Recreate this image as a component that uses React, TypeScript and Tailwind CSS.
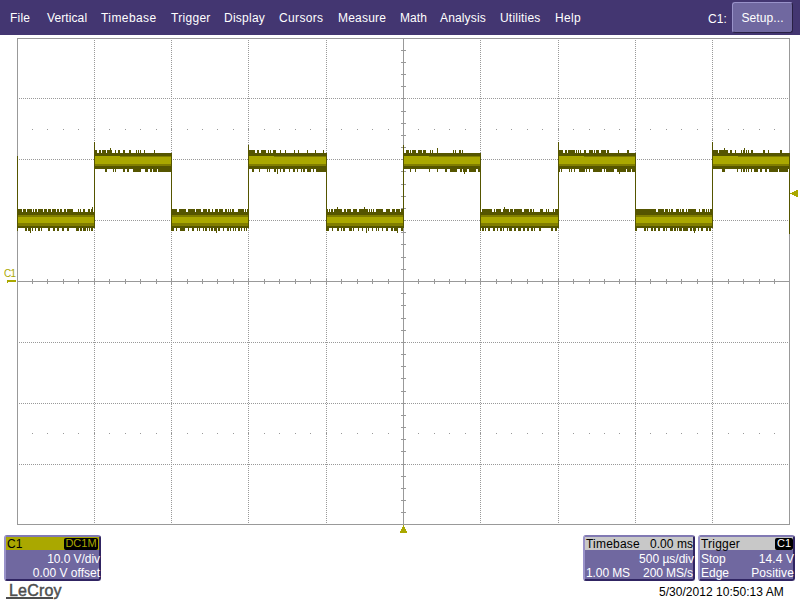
import React from "react";

type Seg = [number, number];

interface Level {
  high: boolean;
  x: number;
  end: number;
  top: Seg[];
  bottom: Seg[];
  peaks: number[];
  dips: number[];
}

const menu = [
  { label: "File", cls: "w-[37px] tracking-[0.2px]" },
  { label: "Vertical", cls: "w-[54px] tracking-[0.1px]" },
  { label: "Timebase", cls: "w-[70px] tracking-[0.42px]" },
  { label: "Trigger", cls: "w-[53px] tracking-[0.3px]" },
  { label: "Display", cls: "w-[55px] tracking-[0.25px]" },
  { label: "Cursors", cls: "w-[59px] tracking-[0.35px]" },
  { label: "Measure", cls: "w-[62px] tracking-[0.2px]" },
  { label: "Math", cls: "w-[40px] tracking-[0.1px]" },
  { label: "Analysis", cls: "w-[60px] tracking-[0.15px]" },
  { label: "Utilities", cls: "w-[55px] tracking-[0.2px]" },
  { label: "Help", cls: "w-[40px] tracking-[0.3px]" },
];

const levels: Level[] = [
  {
    high: false, x: 17, end: 95,
    top: [[17,5],[23,3],[27,5],[33,1],[35,2],[38,5],[44,3],[48,3],[52,4],[57,2],[60,2],[64,2],[67,6],[78,1],[80,1],[83,2],[88,2],[91,2]],
    bottom: [[17,1],[25,2],[28,3],[32,1],[35,1],[38,2],[41,1],[48,2],[53,2],[57,2],[62,2],[67,2],[76,3],[80,2],[83,3],[87,1],[89,1],[91,2]],
    peaks: [92], dips: [30],
  },
  {
    high: true, x: 94, end: 172,
    top: [[95,2],[99,2],[102,4],[107,5],[115,1],[118,2],[123,2],[129,2],[136,1],[138,1],[140,1],[144,1],[154,1]],
    bottom: [[105,2],[113,1],[115,1],[123,2],[127,2],[133,8],[145,3],[150,2],[153,4],[158,13]],
    peaks: [110], dips: [],
  },
  {
    high: false, x: 171, end: 249,
    top: [[172,5],[179,7],[188,7],[196,5],[203,4],[208,2],[212,1],[215,3],[219,4],[225,2],[228,1],[230,1],[232,2],[238,6],[245,1],[247,1]],
    bottom: [[172,2],[176,1],[180,5],[188,1],[192,2],[197,1],[199,1],[203,1],[205,2],[209,1],[211,2],[214,3],[218,2],[223,1],[227,2],[230,1],[233,1],[235,1],[238,2],[241,1],[244,1],[246,1]],
    peaks: [], dips: [216],
  },
  {
    high: true, x: 248, end: 327,
    top: [[249,6],[257,2],[261,5],[268,1],[270,1],[273,3],[280,1],[285,1],[294,1],[298,1],[307,1],[315,1],[323,1]],
    bottom: [[252,2],[259,1],[267,1],[269,1],[274,2],[277,1],[280,1],[283,2],[289,1],[293,2],[297,1],[301,1],[303,2],[307,4],[313,1],[316,10]],
    peaks: [], dips: [277],
  },
  {
    high: false, x: 326, end: 404,
    top: [[327,1],[329,1],[331,2],[334,8],[344,2],[347,4],[353,4],[359,9],[369,1],[371,1],[373,1],[376,7],[386,4],[392,3],[396,4],[401,2]],
    bottom: [[327,2],[332,1],[337,2],[341,1],[343,2],[349,3],[353,1],[358,1],[362,1],[366,1],[368,1],[372,1],[376,1],[378,1],[382,1],[386,2],[391,2],[394,4],[401,2]],
    peaks: [337,364], dips: [366,397],
  },
  {
    high: true, x: 403, end: 481,
    top: [[406,3],[410,1],[412,4],[418,4],[423,3],[430,1],[432,1],[437,1],[453,1],[455,1],[459,2],[462,1]],
    bottom: [[410,1],[415,1],[429,1],[437,1],[445,2],[450,7],[460,2],[463,4],[469,7],[478,2]],
    peaks: [437], dips: [464],
  },
  {
    high: false, x: 480, end: 559,
    top: [[482,10],[494,1],[496,5],[503,6],[510,3],[514,8],[524,5],[530,2],[533,1],[540,3],[546,1],[548,1],[553,1],[555,3]],
    bottom: [[482,2],[485,1],[488,2],[493,2],[497,1],[500,2],[503,1],[507,1],[509,3],[514,2],[518,3],[523,2],[527,2],[531,2],[534,1],[539,2],[551,2],[555,2]],
    peaks: [504], dips: [],
  },
  {
    high: true, x: 558, end: 636,
    top: [[559,4],[565,2],[568,7],[576,1],[578,1],[580,1],[584,2],[589,4],[594,1],[596,3],[601,5],[607,2],[618,1],[627,2]],
    bottom: [[559,1],[561,1],[569,1],[571,1],[574,1],[579,6],[586,1],[589,1],[593,9],[604,1],[606,8],[617,9],[627,4],[632,3]],
    peaks: [], dips: [619],
  },
  {
    high: false, x: 635, end: 713,
    top: [[636,20],[658,6],[665,3],[669,1],[671,2],[676,3],[680,1],[682,2],[686,1],[688,8],[699,1],[702,3],[706,1],[708,1],[710,2]],
    bottom: [[636,1],[644,2],[647,1],[651,2],[654,2],[658,2],[663,2],[666,1],[670,3],[674,2],[677,1],[679,3],[683,5],[690,2],[693,3],[698,1],[701,2],[706,2],[709,2]],
    peaks: [], dips: [694],
  },
  {
    high: true, x: 712, end: 790,
    top: [[713,5],[719,4],[723,5],[730,2],[735,1],[741,1],[743,2],[746,1],[748,1],[751,2],[763,2],[768,1],[780,2]],
    bottom: [[722,3],[737,1],[741,1],[743,2],[746,1],[748,1],[751,1],[754,4],[760,2],[765,2],[769,9],[779,9]],
    peaks: [724,744], dips: [],
  },
];

// Vertical strokes at each transition: x, top, bottom
const edges: [number, number, number][] = [
  [17,156,230],[94,142,228],[171,153,231],[248,145,228],[326,153,231],
  [403,145,228],[480,153,231],[558,142,228],[635,153,231],[712,142,228],[789,153,234],
];

const tickX = (i: number) => Math.min(789, Math.floor(17 + i * 15.46));
const tickY = (i: number) => Math.floor(38.1 + i * 12.17);
const range = (n: number) => Array.from({ length: n }, (_, i) => i);

function Plateau({ level }: { level: Level }) {
  const { high, x, end, top, bottom, peaks, dips } = level;
  const t = high ? 153 : 212;
  const b = high ? 169 : 228;
  const w = end - x;
  return (
    <g>
      <g fill="#555500">
        <rect x={x} y={t} width={w} height={16} />
        {top.map(([s, n]) => <rect key={s} x={s} y={t - 3} width={n} height={3} />)}
        {bottom.map(([s, n]) => <rect key={s} x={s} y={b} width={n} height={3} />)}
        {peaks.map((p) => <rect key={p} x={p} y={t - 5} width={1} height={5} />)}
        {dips.map((p) => <rect key={p} x={p} y={b} width={1} height={5} />)}
      </g>
      <rect x={x} y={t + 3} width={w} height={high ? 10 : 11} fill="#807d00" />
      <rect x={x} y={high ? 157 : 217} width={w} height={high ? 7 : 6} fill="#aaa800" />
      {high && <rect x={x} y={156} width={26} height={1} fill="#aaa800" />}
    </g>
  );
}

function Graticule() {
  return (
    <svg width="800" height="500" viewBox="0 35 800 500" shapeRendering="crispEdges" className="block">
      <g stroke="#999999" strokeDasharray="1 1">
        {range(9).map((i) => {
          const x = tickX((i + 1) * 5) + 0.5;
          return <line key={i} x1={x} x2={x} y1={40} y2={524} />;
        })}
        {range(7).map((i) => {
          const y = tickY((i + 1) * 5) + 0.5;
          return <line key={i} x1={19} x2={789} y1={y} y2={y} />;
        })}
      </g>
      <g fill="#999999">
        <rect x="17" y="38" width="773" height="1" />
        <rect x="17" y="524" width="773" height="1" />
        <rect x="17" y="38" width="1" height="487" />
        <rect x="789" y="38" width="1" height="487" />
        <rect x="403" y="38" width="1" height="487" />
        <rect x="17" y="281" width="773" height="1" />
        {range(49).map((i) => (
          <g key={i}>
            <rect x={tickX(i + 1)} y="279" width="1" height="5" />
            <rect x={tickX(i + 1)} y="129" width="1" height="1" />
            <rect x={tickX(i + 1)} y="433" width="1" height="1" />
          </g>
        ))}
        {range(39).map((i) => <rect key={i} x="401" y={tickY(i + 1)} width="5" height="1" />)}
      </g>
      {levels.map((l) => <Plateau key={l.x} level={l} />)}
      {edges.map(([x, a, b]) => <rect key={x} x={x} y={a} width="1" height={b - a} fill="#555500" />)}
      <g fill="#aaa800">
        <text x="4" y="277" fontSize="10" fontFamily="Liberation Sans, sans-serif" textLength="12">C1</text>
        <rect x="7" y="280" width="9" height="2" />
        <rect x="7" y="282" width="1" height="1" />
        <path d="M790 193h2v-1h2v-1h2v-1h2v7h-2v-1h-2v-1h-2v-1h-2z" />
        <path d="M403 525h1v2h1v2h1v2h1v2h-7v-2h1v-2h1v-2h1z" />
      </g>
    </svg>
  );
}

const panel = "h-[46px] rounded-[3px] border-2 border-t-[#8179b3] border-l-[#9992c9] border-r-[#302462] border-b-[#302462] bg-[#7068a0] text-white text-[12px]";

export default function App() {
  return (
    <div className="flex h-[600px] w-[800px] flex-col overflow-hidden bg-white font-['Liberation_Sans',Arial,sans-serif] whitespace-nowrap">
      <header className="flex h-[35px] shrink-0 items-center bg-[#433671] pl-[10px] text-[12px] text-white">
        <nav className="flex w-[698px]">
          {menu.map((m) => <span key={m.label} className={m.cls}>{m.label}</span>)}
        </nav>
        <span className="w-[24px] pt-[2px] tracking-[0.1px]">C1:</span>
        <button className="-mt-px h-[31px] w-[61px] rounded-[3px] border border-t-[#9992c9] border-l-[#9992c9] border-r-[#282044] border-b-[#282044] bg-[#7068a0] pt-px tracking-[0.1px]">
          Setup...
        </button>
      </header>
      <main className="h-[500px] shrink-0">
        <Graticule />
      </main>
      <footer className="flex h-[65px] pl-[4px]">
        <div className="w-[97px]">
          <section className={panel}>
            <div className="flex h-[13px] items-center justify-between bg-[#aaa800] pr-px pl-px text-black">
              <span>C1</span>
              <span className="flex h-[12px] w-[34px] items-center justify-center rounded-[2px] bg-black text-[11px] text-[#aaa800]">DC1M</span>
            </div>
            <div className="-mr-px h-[14px] pt-[2px] text-right leading-[14px] tracking-[-0.05px]">10.0 V/div</div>
            <div className="-mr-px pt-[2px] text-right leading-[14px]">0.00 V offset</div>
          </section>
          <div className="ml-[2px] h-[19px] w-[60px] pt-px pl-[3px] text-[16px] leading-[18px] text-[#4d4d4d]">
            <span className="block h-[15px] tracking-[0.2px] [-webkit-text-stroke:0.45px_#4d4d4d]">LeCroy</span>
            <div className="-ml-[3px] h-[2px] w-[47px] bg-[#4d4d4d]" />
          </div>
        </div>
        <div className="ml-[482px] w-[213px]">
          <div className="flex gap-[3px]">
            <section className={panel + " w-[112px]"}>
              <div className="flex h-[13px] items-center justify-between bg-[#c8c8c8] pl-px text-black">
                <span className="tracking-[0.2px]">Timebase</span>
                <span className="tracking-[0.05px]">0.00 ms</span>
              </div>
              <div className="-mr-px h-[14px] pt-[2px] text-right leading-[14px]">500 µs/div</div>
              <div className="flex justify-between pt-[2px] pl-px leading-[14px] tracking-[-0.1px]">
                <span>1.00 MS</span>
                <span>200 MS/s</span>
              </div>
            </section>
            <section className={panel + " w-[97px]"}>
              <div className="flex h-[13px] items-center justify-between bg-[#c8c8c8] pl-px text-black">
                <span className="tracking-[0.2px]">Trigger</span>
                <span className="flex h-[12px] w-[18px] items-center justify-center rounded-[2px] bg-black text-[11px] text-white">C1</span>
              </div>
              <div className="-mr-px flex h-[14px] justify-between pt-[2px] pl-px leading-[14px]">
                <span>Stop</span>
                <span className="tracking-[0.1px]">14.4 V</span>
              </div>
              <div className="-mr-px flex justify-between pt-[2px] pl-px leading-[14px]">
                <span>Edge</span>
                <span className="tracking-[0.1px]">Positive</span>
              </div>
            </section>
          </div>
          <div className="pt-[4px] pl-[76px] text-[12px] leading-[14px] tracking-[0.03px] text-black">5/30/2012 10:50:13 AM</div>
        </div>
      </footer>
    </div>
  );
}
